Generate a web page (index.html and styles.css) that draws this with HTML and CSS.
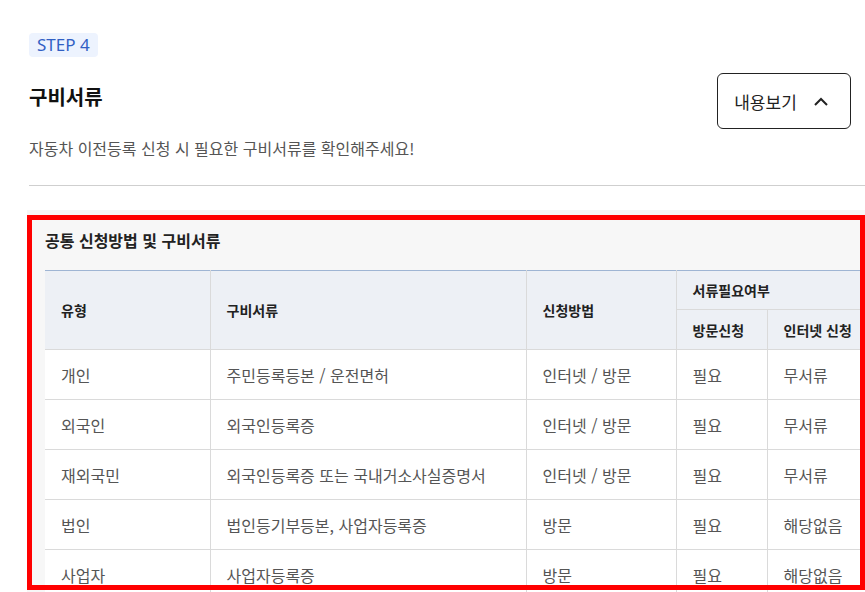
FILE: index.html
```html
<!DOCTYPE html>
<html lang="ko">
<head>
<meta charset="utf-8">
<link rel="stylesheet" href="styles.css">
</head>
<body>
<div class="page">
  <section class="step">
    <span class="badge">STEP 4</span>
    <div class="head-row">
      <h2 class="title">구비서류</h2>
      <button class="toggle">내용보기
        <svg width="14" height="9" viewBox="0 0 14 9"><path d="M1 8 L7 2 L13 8" fill="none" stroke="#222" stroke-width="2"/></svg>
      </button>
    </div>
    <p class="desc">자동차 이전등록 신청 시 필요한 구비서류를 확인해주세요!</p>
    <hr class="divider">
  </section>
  <section class="panel">
    <h3 class="panel-title">공통 신청방법 및 구비서류</h3>
    <table class="docs">
      <colgroup>
        <col class="c1"><col class="c2"><col class="c3"><col class="c4"><col class="c5">
      </colgroup>
      <thead>
        <tr class="h1">
          <th rowspan="2">유형</th>
          <th rowspan="2">구비서류</th>
          <th rowspan="2">신청방법</th>
          <th colspan="2">서류필요여부</th>
        </tr>
        <tr class="h2">
          <th>방문신청</th>
          <th>인터넷 신청</th>
        </tr>
      </thead>
      <tbody>
        <tr><td>개인</td><td>주민등록등본 / 운전면허</td><td>인터넷 / 방문</td><td>필요</td><td>무서류</td></tr>
        <tr><td>외국인</td><td>외국인등록증</td><td>인터넷 / 방문</td><td>필요</td><td>무서류</td></tr>
        <tr><td>재외국민</td><td>외국인등록증 또는 국내거소사실증명서</td><td>인터넷 / 방문</td><td>필요</td><td>무서류</td></tr>
        <tr><td>법인</td><td>법인등기부등본, 사업자등록증</td><td>방문</td><td>필요</td><td>해당없음</td></tr>
        <tr><td>사업자</td><td>사업자등록증</td><td>방문</td><td>필요</td><td>해당없음</td></tr>
      </tbody>
    </table>
  </section>
  <div class="highlight"></div>
</div>
</body>
</html>
```

FILE: styles.css
```css
html, body {
  margin: 0;
  padding: 0;
  background: #fff;
  overflow: hidden;
  width: 865px;
  height: 592px;
}
body {
  font-family: "Noto Sans CJK KR", "Noto Sans", sans-serif;
  color: #222;
}
.page {
  position: relative;
  padding: 32px 0 0 29px;
}
.step {
  width: 836px;
}
.badge {
  display: inline-block;
  height: 24px;
  line-height: 24px;
  padding: 0 8px;
  background: #edf3fe;
  color: #3160c4;
  font-family: "Noto Sans", sans-serif;
  font-size: 17px;
  border-radius: 4px;
}
.head-row {
  display: flex;
  justify-content: space-between;
  align-items: flex-start;
  padding-right: 14px;
  margin-top: 16px;
}
.title {
  margin: 10px 0 0;
  font-size: 20px;
  font-weight: 700;
  line-height: 28px;
  color: #111;
}
.toggle {
  width: 134px;
  height: 56px;
  border: 1px solid #222;
  border-radius: 6px;
  background: #fff;
  font-family: "Noto Sans CJK KR", sans-serif;
  font-size: 17px;
  color: #222;
  display: flex;
  align-items: center;
  justify-content: center;
  gap: 17px;
  padding: 0 6px 0 0;
}
.desc {
  margin: 8px 0 0;
  font-size: 16px;
  color: #555;
  line-height: 22px;
}
.divider {
  margin: 26px 0 0;
  border: 0;
  border-top: 1px solid #cfcfcf;
}
.panel {
  margin-top: 24px;
  margin-left: -2px;
  width: 900px;
  background: #f7f7f7;
  padding: 18px 0 0 18px;
  height: 400px;
}
.panel-title {
  margin: 0 0 18px;
  font-size: 16px;
  font-weight: 700;
  line-height: 24px;
  color: #222;
}
.docs {
  border-collapse: collapse;
  table-layout: fixed;
  width: 860px;
  background: #fff;
  border-top: 1px solid #9fb5d3;
}
.c1 { width: 165px; }
.c2 { width: 316px; }
.c3 { width: 150px; }
.c4 { width: 91px; }
.c5 { width: 138px; }
.docs th, .docs td {
  text-align: left;
  padding: 0 16px;
  border: 1px solid #dadada;
}
.docs tr > :first-child { border-left: 0; }
.docs th {
  background: #edf0f5;
  font-size: 14px;
  font-weight: 700;
  color: #222;
}
.docs .h1 th { border-top: 0; }
.h1 { height: 39px; }
.h2 { height: 40px; }
.docs td {
  height: 49px;
  font-size: 16px;
  color: #555;
}
.highlight {
  position: absolute;
  left: 27px;
  top: 215px;
  width: 828px;
  height: 365px;
  border: 5px solid #ff0000;
}
```
